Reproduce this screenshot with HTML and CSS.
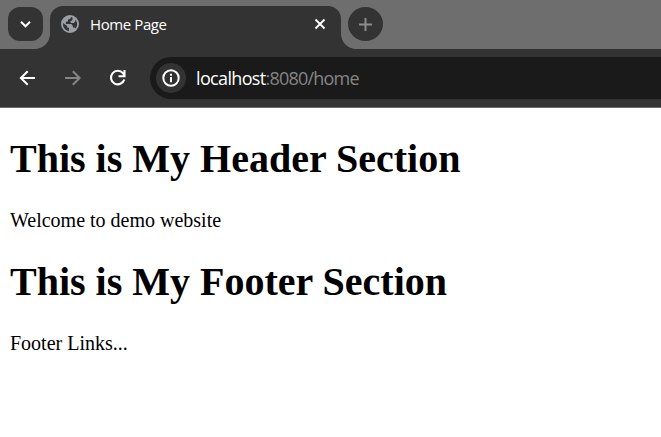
FILE: index.html
```
<!DOCTYPE html>
<html lang="en">
<head>
<meta charset="utf-8">
<title>Home Page</title>
<link rel="stylesheet" href="styles.css">
</head>
<body>
<header class="tabstrip">
  <button class="tab-search" aria-label="Search tabs"><svg width="35" height="34" viewBox="0 0 35 34"><path d="M13 14.8l4.5 4.5 4.5-4.5" fill="none" stroke="#fff" stroke-width="2"/></svg></button>
  <div class="tab">
    <svg class="globe" width="18" height="18" viewBox="0 0 18 18"><circle cx="9" cy="9" r="9" fill="#9aa0a6"/><path d="M2 8.1L6.1 11v1.6l1.9.5v2.8C4.400 15.800 1.700 12.800 2 8.100zM9.900 2.100C9.800 3.800 9 4.400 7 4.600V6.300L4.900 7.100V9h5.500l1.500 2v1.500h1.700l1 1C17.200 10.300 16 6.500 14.300 4.600V6.500l-1.700 1.400H10.300L9 6.700 11.500 5V2.500z" fill="#333"/></svg>
    <span class="tab-title">Home Page</span>
    <svg class="close" width="12" height="12" viewBox="0 0 12 12"><path d="M1.500 1.500l9 9m0-9l-9 9" stroke="#fff" stroke-width="1.900"/></svg>
  </div>
  <button class="new-tab" aria-label="New tab"><svg width="35" height="34" viewBox="0 0 35 34"><path d="M11 17.500h13M17.500 11v13" stroke="#8c8c8c" stroke-width="2"/></svg></button>
</header>
<nav class="toolbar">
  <svg class="nav-icon" width="18" height="18" viewBox="0 0 18 18"><path d="M16 9H2.500M8.700 2.200L1.900 9l6.800 6.800" fill="none" stroke="#fff" stroke-width="2"/></svg>
  <svg class="nav-icon" width="18" height="18" viewBox="0 0 18 18"><path d="M1 9h14M8.800 2.200L15.600 9l-6.800 6.800" fill="none" stroke="#858585" stroke-width="2"/></svg>
  <svg class="nav-icon" width="18" height="18" viewBox="0 0 18 18"><path d="M15.300 10.500A6.800 6.800 0 1 1 14 4.200L15.800 6.500M15.500 1v6.200h-6" fill="none" stroke="#fff" stroke-width="2.100"/></svg>
  <div class="omnibox">
    <span class="site-info"><svg width="18" height="18" viewBox="0 0 18 18"><circle cx="9" cy="9" r="7.700" fill="none" stroke="#fff" stroke-width="2"/><path d="M9 8v5.200M9 4.700v2" stroke="#fff" stroke-width="2"/></svg></span>
    <span class="url"><b>localhost</b>:8080/home</span>
  </div>
</nav>
<main class="page">
  <h1>This is My Header Section</h1>
  <p>Welcome to demo website</p>
  <h1>This is My Footer Section</h1>
  <p>Footer Links...</p>
</main>
</body>
</html>
```
FILE: styles.css
```
body {
  margin: 0;
  background: #fff;
  overflow: hidden;
}
svg {
  display: block;
  flex: none;
}
button {
  border: 0;
  padding: 0;
  background: #333;
}
.tabstrip {
  display: flex;
  height: 49px;
  background: #6e6e6e;
  font-family: "Open Sans", "Noto Sans", sans-serif;
}
.tab-search {
  width: 35px;
  height: 34px;
  margin: 7px 7px 0 8px;
  border-radius: 12px;
}
.tab {
  position: relative;
  display: flex;
  align-items: center;
  box-sizing: border-box;
  width: 291px;
  height: 43px;
  margin-top: 6px;
  padding: 0 15px 7px 11px;
  border-radius: 13px 13px 0 0;
  background: #333;
}
.tab::before,
.tab::after {
  content: "";
  position: absolute;
  bottom: 0;
  width: 15px;
  height: 15px;
}
.tab::before {
  right: 100%;
  background: radial-gradient(circle at 0 0, transparent 14.500px, #333 15.200px);
}
.tab::after {
  left: 100%;
  background: radial-gradient(circle at 100% 0, transparent 14.500px, #333 15.200px);
}
.tab-title {
  flex: 1;
  margin-left: 11px;
  color: #fff;
  font-size: 15px;
  line-height: 20px;
  letter-spacing: -0.400px;
}
.new-tab {
  width: 35px;
  height: 34px;
  margin: 7px 0 0 7px;
  border-radius: 50%;
}
.toolbar {
  display: flex;
  align-items: center;
  box-sizing: border-box;
  height: 59px;
  padding-left: 19px;
  border-bottom: 1px solid #696969;
  background: #333;
}
.nav-icon {
  margin-right: 27px;
}
.omnibox {
  display: flex;
  align-items: center;
  flex: 1;
  height: 42px;
  margin-left: -4px;
  padding-left: 6px;
  border-radius: 21px 0 0 21px;
  background: #1a1a1a;
}
.site-info {
  display: grid;
  place-items: center;
  width: 30px;
  height: 30px;
  margin-right: 10px;
  border-radius: 50%;
  background: #333;
}
.url {
  color: #858585;
  font: 18px/24px "Open Sans", "Noto Sans", sans-serif;
  letter-spacing: -0.800px;
}
.url b {
  color: #fff;
  font-weight: 400;
  letter-spacing: -0.650px;
}
.page {
  display: flow-root;
  padding: 1px 10px 0;
  color: #000;
  font: 20px/23px "Liberation Serif", "Times New Roman", serif;
}
.page h1 {
  margin: 27px 0;
  font-size: 40px;
  line-height: 46px;
}
.page p {
  margin: 0;
}
```
